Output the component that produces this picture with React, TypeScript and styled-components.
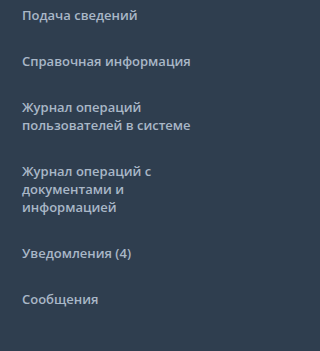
import React from 'react';
import styled, { createGlobalStyle } from 'styled-components';

const GlobalStyle = createGlobalStyle`
  html, body {
    margin: 0;
    padding: 0;
    background-color: #2f3e4f;
  }
`;

const Sidebar = styled.nav`
  width: 208px;
  height: 351px;
  overflow: hidden;
  background-color: #2f3e4f;
  font-family: 'Open Sans', 'Liberation Sans', sans-serif;
`;

const Menu = styled.ul`
  list-style: none;
  margin: -8px 0 0;
  padding: 0;
`;

const MenuItem = styled.li`
  padding: 14px 10px 14px 22px;
`;

const MenuLink = styled.a`
  display: block;
  color: #a9b7c7;
  font-size: 13px;
  font-weight: 600;
  line-height: 18px;
  text-decoration: none;
  cursor: pointer;
`;

const items = [
  'Подача сведений',
  'Справочная информация',
  'Журнал операций пользователей в системе',
  'Журнал операций с документами и информацией',
  'Уведомления (4)',
  'Сообщения',
];

function App() {
  return (
    <>
      <GlobalStyle />
      <Sidebar>
        <Menu>
          {items.map(item => (
            <MenuItem key={item}>
              <MenuLink>{item}</MenuLink>
            </MenuItem>
          ))}
        </Menu>
      </Sidebar>
    </>
  );
}

export default App;
